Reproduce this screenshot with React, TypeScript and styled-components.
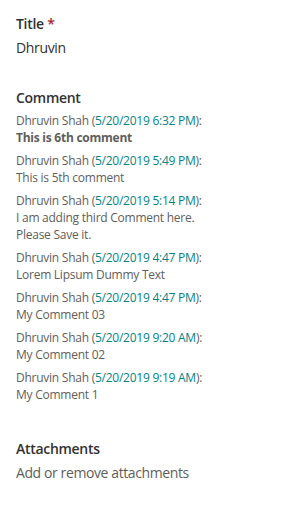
import styled, { createGlobalStyle } from "styled-components";

const GlobalStyle = createGlobalStyle`
  html, body {
    margin: 0;
    padding: 0;
    background: #fff;
  }
  body {
    font-family: "Segoe UI", "Open Sans", sans-serif;
    -webkit-font-smoothing: antialiased;
  }
`;

type CommentItem = {
  author: string;
  date: string;
  text: string;
  latest?: boolean;
};

const COMMENTS: CommentItem[] = [
  { author: "Dhruvin Shah", date: "5/20/2019 6:32 PM", text: "This is 6th comment", latest: true },
  { author: "Dhruvin Shah", date: "5/20/2019 5:49 PM", text: "This is 5th comment" },
  { author: "Dhruvin Shah", date: "5/20/2019 5:14 PM", text: "I am adding third Comment here.\nPlease Save it." },
  { author: "Dhruvin Shah", date: "5/20/2019 4:47 PM", text: "Lorem Lipsum Dummy Text" },
  { author: "Dhruvin Shah", date: "5/20/2019 4:47 PM", text: "My Comment 03" },
  { author: "Dhruvin Shah", date: "5/20/2019 9:20 AM", text: "My Comment 02" },
  { author: "Dhruvin Shah", date: "5/20/2019 9:19 AM", text: "My Comment 1" },
];

function App() {
  return (
    <>
      <GlobalStyle />
      <Form>
        <Field>
          <Label>
            Title <Required>*</Required>
          </Label>
          <Value>Dhruvin</Value>
        </Field>
        <CommentField>
          <Label>Comment</Label>
          <CommentList>
            {COMMENTS.map((c, i) => (
              <CommentEntry key={i}>
                <Meta>
                  {c.author} (<DateLink>{c.date}</DateLink>):
                </Meta>
                <Body bold={c.latest}>{c.text}</Body>
              </CommentEntry>
            ))}
          </CommentList>
        </CommentField>
        <AttachField>
          <Label>Attachments</Label>
          <Placeholder>Add or remove attachments</Placeholder>
        </AttachField>
      </Form>
    </>
  );
}

export default App;

const Form = styled.div`
  width: 288px;
  height: 523px;
  box-sizing: border-box;
  padding: 14px 16px 0 16px;
  display: flex;
  flex-direction: column;
  color: #323130;
`;

const Field = styled.div`
  display: flex;
  flex-direction: column;
`;

const CommentField = styled(Field)`
  margin-top: 30px;
`;

const AttachField = styled(Field)`
  margin-top: 36px;
`;

const Label = styled.div`
  font-size: 14px;
  font-weight: 600;
  line-height: 20px;
  letter-spacing: -0.3px;
  color: #323130;
  margin-bottom: 4px;
`;

const Required = styled.span`
  color: #a4262c;
`;

const Value = styled.div`
  font-size: 14px;
  line-height: 20px;
  letter-spacing: -0.35px;
  color: #323130;
`;

const CommentList = styled.div`
  display: flex;
  flex-direction: column;
  gap: 6px;
`;

const CommentEntry = styled.div`
  font-size: 12px;
  line-height: 17px;
  letter-spacing: -0.25px;
  color: #605e5c;
`;

const Meta = styled.div``;

const DateLink = styled.span`
  color: #038387;
`;

const Body = styled.div<{ bold?: boolean }>`
  font-weight: ${(p) => (p.bold ? 700 : 400)};
  white-space: pre-line;
`;

const Placeholder = styled.div`
  font-size: 14px;
  line-height: 20px;
  letter-spacing: -0.4px;
  color: #605e5c;
`;
